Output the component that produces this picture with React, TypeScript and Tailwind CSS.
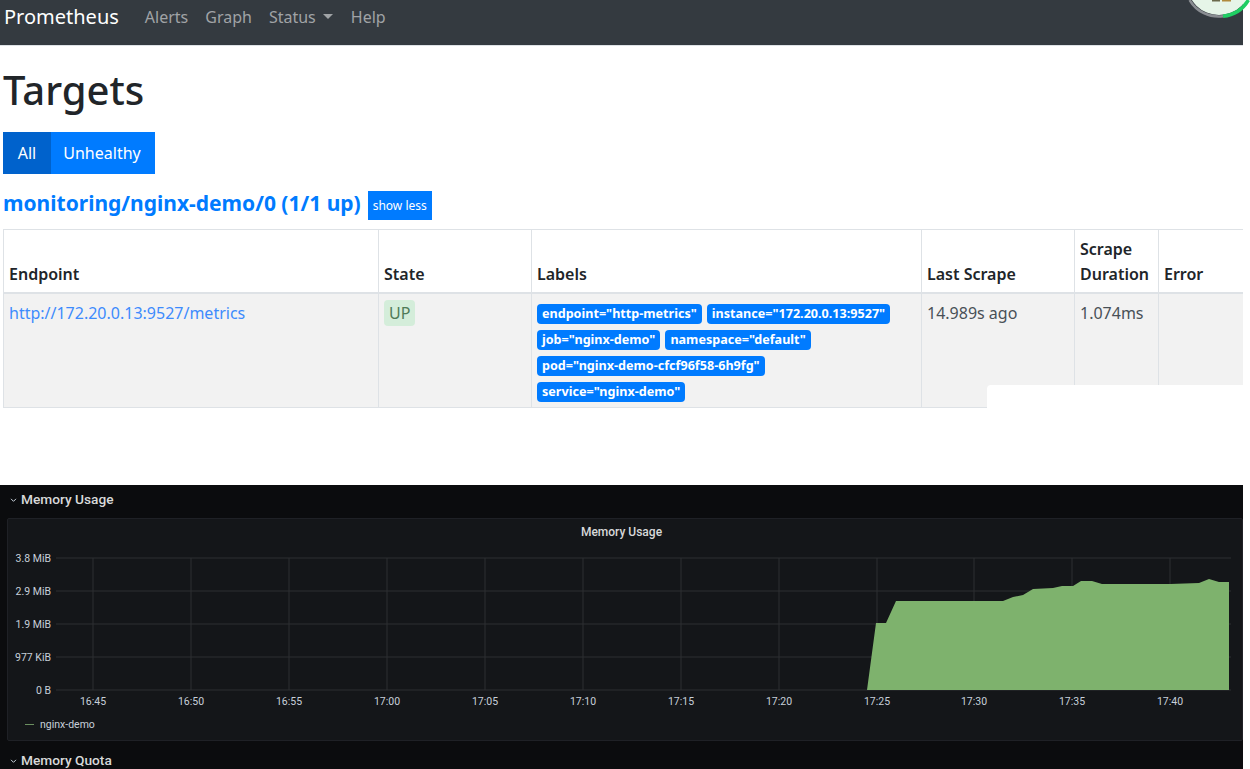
import React from 'react';

const navLinks = ['Alerts', 'Graph'];

const labels = [
  'endpoint="http-metrics"',
  'instance="172.20.0.13:9527"',
  'job="nginx-demo"',
  'namespace="default"',
  'pod="nginx-demo-cfcf96f58-6h9fg"',
  'service="nginx-demo"',
];

const yTicks = [
  { y: 558, label: '3.8 MiB' },
  { y: 591, label: '2.9 MiB' },
  { y: 624, label: '1.9 MiB' },
  { y: 657, label: '977 KiB' },
  { y: 690, label: '0 B' },
];

const xTicks = [
  { x: 93, label: '16:45' },
  { x: 191, label: '16:50' },
  { x: 289, label: '16:55' },
  { x: 387, label: '17:00' },
  { x: 485, label: '17:05' },
  { x: 583, label: '17:10' },
  { x: 681, label: '17:15' },
  { x: 779, label: '17:20' },
  { x: 877, label: '17:25' },
  { x: 974, label: '17:30' },
  { x: 1072, label: '17:35' },
  { x: 1170, label: '17:40' },
];

// read off the reference, in page pixels
const area =
  '867,690 876,623 886,623 896,601 1003,601 1013,597 1023,595 1033,589 1053,588 1062,586 1073,586 1081,581 1092,581 1102,584 1170,584 1199,583 1209,579 1219,582 1229,582 1229,690';

const Chevron = () => (
  <svg viewBox="0 0 8 6" className="w-[7px] h-[5px] mr-[4px] mt-[2px]" fill="none" stroke="#c7d0d9" strokeWidth="1.2">
    <path d="M1 1l3 3 3-3" />
  </svg>
);

const Chart = () => (
  // viewBox is offset so the numbers above stay in page coordinates
  <svg viewBox="8 519 1234 221" className="block w-[1234px] h-[221px]">
    {yTicks.map((t) => (
      <g key={t.label}>
        <line x1="56" x2="1231" y1={t.y} y2={t.y} stroke="#2c2e33" />
        <text x="51" y={t.y + 3.5} textAnchor="end" fontSize="10.5" fill="#c7d0d9">{t.label}</text>
      </g>
    ))}
    {xTicks.map((t) => (
      <g key={t.label}>
        <line x1={t.x} x2={t.x} y1="558" y2="690" stroke="#2c2e33" />
        <text x={t.x} y="705" textAnchor="middle" fontSize="10.5" fill="#c7d0d9">{t.label}</text>
      </g>
    ))}
    <polygon points={area} fill="#7eb26d" />
  </svg>
);

// browser extension badge, cut off by the top of the shot
const Badge = () => (
  <svg viewBox="0 0 70 18" className="absolute left-[1184px] top-0 w-[70px] h-[18px]">
    <circle cx="35" cy="-17" r="32" fill="#e6f5e8" />
    <path d="M5.6 0 A33.5 33.5 0 0 0 39 16.26" fill="none" stroke="#8a8d92" strokeWidth="2.5" />
    <path d="M39 16.26 A33.5 33.5 0 0 0 64.4 0" fill="none" stroke="#1fce63" strokeWidth="3.5" />
    <rect x="28" y="0" width="8" height="1.5" fill="#6b6a4c" />
    <rect x="38" y="0" width="9" height="1.5" fill="#b08a3c" />
  </svg>
);

export default function App() {
  return (
    <div className="relative w-[1250px] h-[769px] overflow-hidden bg-white text-[#212529] font-['Noto_Sans','Open_Sans',sans-serif]">
      <div className="w-[1243px] h-[769px] overflow-hidden">
        <nav className="h-[46px] bg-[#343a40] border-b border-[#dee2e6] flex items-center pl-[4px] pb-[11px] text-[16px]">
          <span className="text-[20px] text-white mr-[26px]">Prometheus</span>
          <div className="flex items-center gap-[17px] text-[#a0a3a6]">
            {navLinks.map((l) => (
              <span key={l}>{l}</span>
            ))}
            <span className="flex items-center">
              Status
              <span className="ml-[7px] mb-[1px] border-x-[5px] border-x-transparent border-t-[5px] border-t-[#a0a3a6]" />
            </span>
            <span className="ml-[1px]">Help</span>
          </div>
        </nav>

        <main className="px-[3px]">
          <h1 className="text-[40px] leading-[48px] font-medium mt-[20px] mb-[18px]">Targets</h1>

          <div className="flex h-[42px] text-[16px] text-white w-fit">
            <span className="w-[48px] bg-[#0062cc] flex items-center justify-center">All</span>
            <span className="w-[104px] bg-[#007bff] flex items-center justify-center pr-[2px]">Unhealthy</span>
          </div>

          <div className="flex items-center mt-[17px] h-[29px]">
            <span className="text-[21px] font-bold text-[#007bff] leading-[25px] mb-[4px] mr-[7px]">monitoring/nginx-demo/0 (1/1 up)</span>
            <span className="w-[64px] h-[29px] bg-[#007bff] text-white text-[12px] flex items-center justify-center">show less</span>
          </div>

          <table className="mt-[9px] w-[1241px] table-fixed border-collapse border border-[#dee2e6] text-[16px]">
            <colgroup>
              <col className="w-[375px]" />
              <col className="w-[153px]" />
              <col className="w-[390px]" />
              <col className="w-[153px]" />
              <col className="w-[84px]" />
              <col />
            </colgroup>
            <thead>
              <tr className="h-[63px] border-b-2 border-[#dee2e6] text-left align-bottom leading-[25px]">
                {['Endpoint', 'State', 'Labels', 'Last Scrape', 'Scrape Duration', 'Error'].map((h) => (
                  <th key={h} className="border-x border-[#dee2e6] font-semibold px-[5px] pb-[5px]">{h}</th>
                ))}
              </tr>
            </thead>
            <tbody>
              <tr className="h-[115px] bg-[#f2f2f2] align-top text-[#495057]">
                <td className="border-x border-[#dee2e6] px-[5px] pt-[7px] text-[#3d8bfd]">http://172.20.0.13:9527/metrics</td>
                <td className="border-x border-[#dee2e6] px-[5px] pt-[6px]">
                  <span className="inline-block h-[26px] leading-[26px] px-[5px] rounded-[4px] bg-[#d4edda] text-[#4f7a58]">UP</span>
                </td>
                <td className="border-x border-[#dee2e6] px-[5px] pt-[10px]">
                  <div className="flex flex-wrap gap-x-[5px] gap-y-[6px] w-[360px]">
                    {labels.map((l) => (
                      <span key={l} className="h-[20px] leading-[20px] px-[5px] rounded-[4px] bg-[#007bff] text-white text-[12.6px] font-bold whitespace-nowrap">{l}</span>
                    ))}
                  </div>
                </td>
                <td className="border-x border-[#dee2e6] px-[5px] pt-[7px]">14.989s ago</td>
                <td className="border-x border-[#dee2e6] px-[5px] pt-[7px]">1.074ms</td>
                <td className="border-x border-[#dee2e6]" />
              </tr>
            </tbody>
          </table>
        </main>
      </div>

      <Badge />

      {/* white patch pasted over the table corner in the shot */}
      <div className="absolute left-[987px] top-[385px] w-[256px] h-[25px] bg-white rounded-tl-[4px]" />

      <section className="absolute left-0 w-[1243px] top-[485px] h-[284px] bg-[#0b0c0e] text-[#d8d9da] font-['Roboto','Inter',sans-serif]">
        <div className="flex items-center h-[33px] pl-[10px] pb-[4px] text-[13.7px] font-medium">
          <Chevron />
          Memory Usage
        </div>
        <div className="relative ml-[7px] h-[223px] bg-[#141619] border border-[#1f2126] rounded-[2px]">
          <Chart />
          <div className="absolute top-[4px] left-0 right-[7px] text-center text-[12px] font-medium text-[#d8d9da]">Memory Usage</div>
          <div className="absolute left-[17px] top-[198px] flex items-center text-[10.5px] text-[#c7d0d9]">
            <span className="w-[9px] h-[1px] bg-[#6b8f60] mr-[6px]" />
            nginx-demo
          </div>
        </div>
        <div className="flex items-center h-[27px] pl-[10px] pt-[12px] text-[13.7px] font-medium">
          <Chevron />
          Memory Quota
        </div>
      </section>
    </div>
  );
}
